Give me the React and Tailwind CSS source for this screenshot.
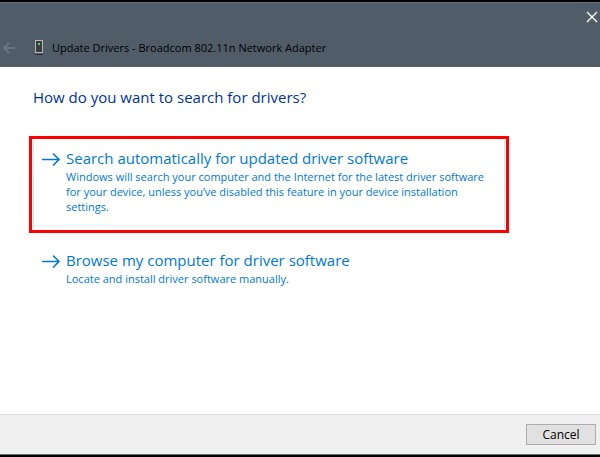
import React from "react";

const options = [
  {
    title: "Search automatically for updated driver software",
    text: "Windows will search your computer and the Internet for the latest driver software for your device, unless you’ve disabled this feature in your device installation settings.",
    highlighted: true,
  },
  {
    title: "Browse my computer for driver software",
    text: "Locate and install driver software manually.",
    highlighted: false,
  },
];

const ArrowRight = () => (
  <svg className="mt-1 h-4 w-5 shrink-0" viewBox="0 0 20 16" fill="none" stroke="#0078d7" strokeWidth="1.6" aria-hidden="true">
    <path d="M0 8.5h17M11 2.5l6 6-6 6" />
  </svg>
);

const DeviceIcon = () => (
  <svg className="h-4 w-2 shrink-0" viewBox="0 0 8 16" aria-hidden="true">
    <path d="M0 14h8v1H0z" fill="#303030" />
    <path d="M0 0h8v13H0z" fill="#b4b8bb" />
    <path d="M1 1h6v11H1z" fill="#3d3d3d" />
    <path d="M3 3h2v2H3z" fill="#3fe83f" />
  </svg>
);

const Option = ({ title, text, highlighted }) => (
  <div className={highlighted ? "border-3 border-[#fe0000] p-px" : "border-3 border-transparent p-px"}>
    <button
      type="button"
      className={
        highlighted
          ? "flex w-full items-start gap-1 border-x border-[#dce6ee] pt-[7px] pr-2 pb-[15px] pl-2 text-left"
          : "flex w-full items-start gap-1 border-x border-transparent pt-[7px] pr-2 pb-[15px] pl-2 text-left"
      }
    >
      <ArrowRight />
      <span className="block">
        <span className="block text-[15px] leading-[22px]">{title}</span>
        <span className="block text-[11px] leading-[15px]">{text}</span>
      </span>
    </button>
  </div>
);

const App = () => {
  return (
    <div className="flex min-h-screen flex-col border-y-2 border-black bg-white font-['Open_Sans','Noto_Sans',sans-serif] text-[12px]">
      <header className="border-t border-[#66717c] bg-[#515c69] pb-[2px]">
        <div className="flex justify-end">
          <button type="button" aria-label="Close" className="flex h-7 w-4 items-center justify-center">
            <svg className="h-3 w-3" viewBox="0 0 12 12" stroke="#fff" strokeWidth="1.4" aria-hidden="true">
              <path d="M1 1l10 10M11 1L1 11" />
            </svg>
          </button>
        </div>
        <div className="flex h-[34px] items-center pl-[2px]">
          <button type="button" aria-label="Back" disabled className="mr-5">
            <svg className="h-3 w-[13px]" viewBox="0 0 13 12" fill="none" stroke="#6a737e" strokeWidth="2" aria-hidden="true">
              <path d="M13 6H2M7 1L2 6l5 5" />
            </svg>
          </button>
          <DeviceIcon />
          <h1 className="ml-[9px] text-[11px] text-black">
            Update Drivers - Broadcom 802.11n Network Adapter
          </h1>
        </div>
      </header>

      <main className="grow px-[29px] pt-5">
        <h2 className="pl-1 text-[15px] leading-[20px] text-[#003399]">
          How do you want to search for drivers?
        </h2>
        <div className="mt-[29px] flex max-w-[480px] flex-col gap-[5px] text-[#0078d7]">
          {options.map((option) => (
            <Option key={option.title} {...option} />
          ))}
        </div>
      </main>

      <footer className="flex justify-end border-t border-b border-t-[#dfdfdf] border-b-[#66717c] bg-[#f0f0f0] px-1 py-[9px]">
        <button type="button" className="h-[21px] w-[70px] border border-[#adadad] bg-[#e1e1e1] text-[12px] leading-4 text-black">
          Cancel
        </button>
      </footer>
    </div>
  );
};

export default App;
